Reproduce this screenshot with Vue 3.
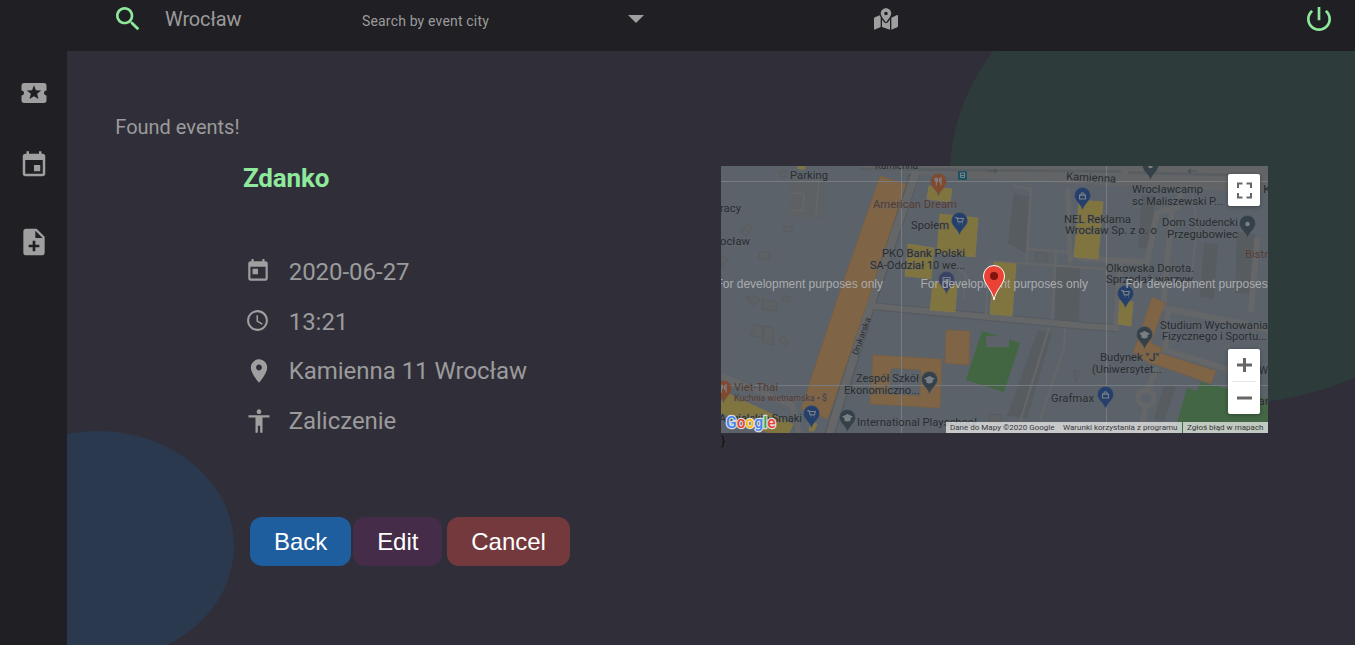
<script setup>
const icons = {
  search: 'M15.5 14h-.79l-.28-.27C15.41 12.59 16 11.11 16 9.5 16 5.91 13.09 3 9.5 3S3 5.91 3 9.5 5.91 16 9.5 16c1.61 0 3.09-.59 4.23-1.57l.27.28v.79l5 4.99L20.49 19l-4.99-5zm-6 0C7.01 14 5 11.99 5 9.5S7.01 5 9.5 5 14 7.01 14 9.5 11.99 14 9.5 14z',
  power: 'M13 3h-2v10h2V3zm4.83 2.17l-1.42 1.42C17.99 7.86 19 9.81 19 12c0 3.87-3.13 7-7 7s-7-3.13-7-7c0-2.19 1.01-4.14 2.58-5.42L6.17 5.17C4.23 6.82 3 9.26 3 12c0 4.97 4.03 9 9 9s9-4.03 9-9c0-2.74-1.23-5.18-3.17-6.83z',
}
const sideIcons = [
  { name: 'ticket', d: 'M20 12c0-1.1.9-2 2-2V6c0-1.1-.9-2-2-2H4c-1.1 0-1.99.9-1.99 2v4c1.1 0 1.99.9 1.99 2s-.89 2-2 2v4c0 1.1.9 2 2 2h16c1.1 0 2-.9 2-2v-4c-1.1 0-2-.9-2-2zm-4.42 4.8L12 14.5l-3.58 2.3 1.08-4.12-3.29-2.69 4.24-.25L12 5.8l1.54 3.95 4.24.25-3.29 2.69 1.09 4.11z' },
  { name: 'event', d: 'M17 12h-5v5h5v-5zM16 1v2H8V1H6v2H5c-1.11 0-1.99.9-1.99 2L3 19c0 1.1.89 2 2 2h14c1.1 0 2-.9 2-2V5c0-1.1-.9-2-2-2h-1V1h-2zm3 18H5V8h14v11z' },
  { name: 'note', d: 'M14 2H6c-1.1 0-1.99.9-1.99 2L4 20c0 1.1.89 2 1.99 2H18c1.1 0 2-.9 2-2V8l-6-6zm2 14h-3v3h-2v-3H8v-2h3v-3h2v3h3v2zm-3-7V3.500L18.500 9H13z' },
]
const details = [
  { name: 'date', text: '2020-06-27', d: 'M19 3h-1V1h-2v2H8V1H6v2H5c-1.11 0-1.99.9-1.99 2L3 19c0 1.1.89 2 2 2h14c1.1 0 2-.9 2-2V5c0-1.1-.9-2-2-2zm0 16H5V8h14v11zM7 10h5v5H7z' },
  { name: 'time', text: '13:21', d: 'M11.99 2C6.47 2 2 6.48 2 12s4.47 10 9.99 10C17.52 22 22 17.52 22 12S17.52 2 11.99 2zM12 20c-4.42 0-8-3.58-8-8s3.58-8 8-8 8 3.58 8 8-3.58 8-8 8zM12.5 7H11v6l5.25 3.15.75-1.23-4.5-2.67z' },
  { name: 'place', text: 'Kamienna 11 Wrocław', d: 'M12 2C8.13 2 5 5.13 5 9c0 5.25 7 13 7 13s7-7.75 7-13c0-3.87-3.13-7-7-7zm0 9.5c-1.38 0-2.5-1.12-2.5-2.5s1.12-2.5 2.5-2.5 2.5 1.12 2.5 2.5-1.12 2.5-2.5 2.5z' },
  { name: 'person', text: 'Zaliczenie', d: 'M12 2c1.1 0 2 .9 2 2s-.9 2-2 2-2-.9-2-2 .9-2 2-2zm9 7h-6v13h-2v-6h-2v6H9V9H3V7h18v2z' },
]
// Map labels: x, baseline y, width, text, optional class
const labels = [
  [790, 178.5, 38, 'Parking'],
  [875, 169, 43, 'Kamienna'],
  [720, 211.5, 21, 'racy'],
  [720, 245, 30, 'ocław'],
  [873, 208, 84, 'American Dream', 'food'],
  [911, 229, 38, 'Społem'],
  [882, 257, 83, 'PKO Bank Polski'],
  [870, 268.5, 95, 'SA-Oddział 10 we...'],
  [1064, 222.5, 67, 'NEL Reklama'],
  [1065, 234, 92, 'Wrocław Sp. z o. o'],
  [1132, 193, 71, 'Wrocławcamp'],
  [1132, 204.5, 91, 'sc Maliszewski P...'],
  [1162, 226, 76, 'Dom Studencki'],
  [1167, 237.5, 71, 'Przegubowiec'],
  [1245, 258, 23, 'Bistr', 'food'],
  [1106, 271.5, 88, 'Olkowska Dorota.'],
  [1106, 282.5, 87, 'Sprzedaż warzyw'],
  [1160, 328.5, 108, 'Studium Wychowania'],
  [1162, 340, 105, 'Fizycznego i Sportu...'],
  [1100, 361, 59, 'Budynek "J"'],
  [1092, 372.5, 70, '(Uniwersytet...'],
  [1051, 402, 43, 'Grafmax'],
  [856, 382, 63, 'Zespół Szkół'],
  [844, 393.5, 76, 'Ekonomiczno...'],
  [734, 391, 44, 'Viet-Thai', 'food'],
  [734, 401, 93, 'Kuchnia wietnamska • $', 'food small'],
  [719, 422, 83, 'Angielskie Smaki'],
  [857, 426, 120, 'International Playschool'],
  [1084, 430, 72, 'Urząd Skarbowy', 'faint'],
  [1263, 193, 8, 'K'],
  [1259, 374, 9, 'W'],
  [1258, 405, 11, 'ar'],
]
// Map pins: x, y of head centre, kind, colour
const pins = [
  [938, 182, 'fork', '#82492f'],
  [959, 221, 'cart', '#243f6c'],
  [946, 280, 'card', '#3a4265'],
  [1082, 196, 'bag', '#243f6c'],
  [1150, 166, 'dot', '#354149'],
  [1247, 224, 'dot', '#354149'],
  [1125, 294, 'cart', '#243f6c'],
  [1144, 335, 'cap', '#354149'],
  [1105, 395, 'bag', '#243f6c'],
  [929, 380, 'cap', '#354149'],
  [723, 389, 'fork', '#82492f'],
  [811, 414, 'cart', '#243f6c'],
  [847, 418, 'cap', '#354149'],
]
const glyphs = {
  fork: 'M-4 -5v3a1.500 1.500 0 0 0 3 0v-3M-2.500 -5v9M3 4v-9q-2 1 -2 5h2',
  cart: 'M-5 -4h2l1.500 5h5l1 -4h-7M-1 3.500h.8M3 3.500h.8',
  card: 'M-4 -3h8v5h-8zM-4 0h8M-2 4h4',
  bag: 'M-3.5 -1h7v4.5h-7zM-1.8 -1v-1a1.8 1.8 0 0 1 3.6 0v1',
  cap: 'M-5 -1.5L0 -4L5 -1.5L0 1ZM-3 0v2.5q3 2 6 0v-2.5',
  dot: 'M-2 0a2 2 0 1 0 4 0a2 2 0 1 0 -4 0',
}
const watermarks = [715.5, 920.5, 1125.5]
</script>

<template>
  <div class="page">
    <header class="topbar">
      <svg class="search" viewBox="0 0 24 24"><path :d="icons.search" /></svg>
      <span class="city">Wrocław</span>
      <div class="select">
        <span>Search by event city</span>
        <svg class="arrow" viewBox="0 0 16 8"><path d="M0 0h16L8 8z" /></svg>
      </div>
      <svg class="mapicon" viewBox="0 0 576 512"><path d="M288 0c-69.59 0-126 56.41-126 126 0 56.26 82.35 158.8 113.9 196.02 6.39 7.54 17.82 7.54 24.2 0C331.65 284.8 414 182.26 414 126 414 56.41 357.59 0 288 0zm0 168c-23.2 0-42-18.8-42-42s18.8-42 42-42 42 18.8 42 42-18.8 42-42 42zM20.12 215.95A32.006 32.006 0 0 0 0 245.66v250.32c0 11.32 11.43 19.06 21.94 14.86L160 448V214.92c-8.84-15.98-16.07-31.54-21.25-46.42L20.12 215.95zM288 359.67c-14.07 0-27.38-6.18-36.51-16.96-19.66-23.2-40.57-49.62-59.49-76.72v182l192 64V266c-18.92 27.09-39.82 53.52-59.49 76.72-9.13 10.77-22.44 16.95-36.51 16.95zm266.06-198.51L416 224v288l139.88-55.95A31.996 31.996 0 0 0 576 426.34V176.02c0-11.32-11.43-19.06-21.94-14.86z" /></svg>
      <svg class="power" viewBox="0 0 24 24"><path :d="icons.power" /></svg>
    </header>
    <div class="body">
      <nav class="sidebar">
        <svg v-for="i in sideIcons" :key="i.name" :class="i.name" viewBox="0 0 24 24"><path :d="i.d" /></svg>
      </nav>
      <main class="main">
        <div class="blob green"></div>
        <div class="blob blue"></div>
        <p class="found">Found events!</p>
        <div class="columns">
          <section class="info">
            <h1>Zdanko</h1>
            <ul>
              <li v-for="d in details" :key="d.name">
                <svg :class="d.name" viewBox="0 0 24 24"><path :d="d.d" /></svg>
                <span>{{ d.text }}</span>
              </li>
            </ul>
            <div class="buttons">
              <button class="back">Back</button>
              <button class="edit">Edit</button>
              <button class="cancel">Cancel</button>
            </div>
          </section>
          <section class="mapcol">
            <div class="map">
              <svg class="canvas" viewBox="721 166 547 267">
                <rect x="721" y="166" width="547" height="267" fill="#5b626a" />
                <!-- parking lots and grey grounds -->
                <path d="M790 178l35 3l-2 38l-34 -3z" fill="#5e6163" />
                <path d="M1014 193l15 4l-4 56l-17 -10zM1204 243l14 1l-4 55l-14 -2zM1237 232l18 2l-4 60l-16 -1zM1056 266l24 2l-1 55l-24 -3zM1038 330l14 3l-25 85l-20 -2zM1164 385l12 2l-12 34l-10 -2zM1142 195l13 1l-4 53l-13 -1z" fill="#575c60" />
                <path d="M747 223l6 4l-7 9l-5 -4zM784 226l8 1l0 5l-8 -1zM760 251l10 2l-1 7l-10 -2zM721 255l7 5l-6 8zM745 298l8 -3l7 5l-6 6zM763 299l14 3l-1 9l-14 -2zM783 295l7 2l-2 5l-6 -2zM754 324l10 2l-2 12l-12 -3zM765 326l8 2l1 17l-12 -3zM781 335l8 7l-3 4l-7 -6zM780 171h6v6h-6zM1036 253h11v8h-11zM990 414l12 1l-1 8l-12 -1zM1075 370l6 3l-6 9z" fill="#5d6164" stroke="#56595b" stroke-width=".6" />
                <!-- roads -->
                <g fill="none" stroke="#545a5f" stroke-linejoin="round">
                  <path d="M915 172L872 300L829 436" stroke-width="11" />
                  <path d="M870 306L1085 326L1116 328" stroke-width="8" />
                </g>
                <path d="M850 166h418v27L1110 186L930 176Z" fill="#626466" />
                <g fill="none" stroke="#656668" stroke-linejoin="round" stroke-linecap="round">
                  <path d="M916 172L872 300L829 436" stroke-width="8" />
                  <path d="M872 306L1085 326L1116 328" stroke-width="6" />
                  <path d="M1116 328L1120 266M1080 258L1147 262L1157 213L1178 207L1181 190M1172 210L1163 308L1245 324L1268 330M1257 240L1251 310" stroke-width="6" />
                  <path d="M1168 309L1165 350L1230 370L1250 379M1156 370L1147 391M1146 405L1140 433M721 376L792 405L799 433M1201 433" stroke-width="6" />
                  <path d="M1068 190L1070 261" stroke-width="5" />
                  <path d="M1013 183L1017 187L1031 189L1027 261M1027 249L1095 254M990 261L1120 270M1056 251L1052 324M963 298L966 275L952 264M1049 328L1020 422M1065 329L1064 348L1040 420M986 315L989 263M1192 192L1197 226L1190 292" stroke-width="2.3" />
                  <path d="M792 193L804 194L803 211L790 210M819 180L816 216" stroke-width="1.5" />
                  <circle cx="1146" cy="398" r="8" stroke-width="5" />
                </g>
                <path d="M860 169L1121 171.5M1128 172.5L1228 175" fill="none" stroke="#575d61" stroke-width="2.5" />
                <path d="M988 171h9M994 169l3 2l-3 2M1197 171h-9M1191 169l-3 2l3 2" fill="none" stroke="#4e5254" stroke-width="1.2" />
                <!-- orange buildings -->
                <g fill="#7f6445" stroke="#756047" stroke-width=".8">
                  <path d="M880 176L906 184L868 300L828 419L801 409L837 300Z" />
                  <path fill-rule="evenodd" d="M873 355L942 359L940 408L870 404ZM891 368L921 370L920 396L889 394Z" />
                  <path d="M946 330L970 331L969 365L945 363Z" />
                  <path d="M1152 297L1165 303L1151 343L1162 348L1160 353L1216 371L1211 384L1160 366L1149 363L1133 352L1138 340Z" />
                </g>
                <!-- yellow buildings -->
                <g fill="#80743f" stroke="#85794a" stroke-width=".7">
                  <path d="M929 186L952 189L950 202L927 199Z" />
                  <path d="M940 214L978 218L975 257L937 253Z" />
                  <path d="M908 244L934 248L931 279L905 276Z" />
                  <path d="M933 282L957 285L955 312L930 310Z" />
                  <path d="M994 262L1016 264L1012 316L990 314Z" />
                  <path d="M1079 200L1103 202L1098 259L1074 257Z" />
                  <path d="M1120 300L1133 302L1131 326L1118 324Z" />
                  <path d="M727 393L793 424L789 433H769L721 413V402Z" />
                  <path d="M811 422L817 424L814 431H809ZM798 166h7v3h-7z" />
                </g>
                <!-- greenery -->
                <path d="M982 331L1020 343L1004 392L966 380Z" fill="#426641" />
                <path d="M986 336h23v11h-23z" fill="#5c6267" />
                <path d="M1187 388L1197 391L1201 382L1268 399V433H1174Z" fill="#436644" />
                <!-- tile seams -->
                <path d="M721 181.5H1268M721 385.5H1268M901.5 166V433M1106.5 166V433" stroke="#777c81" stroke-width="1" />
                <g v-for="(p, i) in pins" :key="'p' + i" :transform="`translate(${p[0] + 0.5} ${p[1]})`">
                  <path d="M0 14C-1.5 8 -8 5 -8 -.5A8 8 0 0 1 8 -.5C8 5 1.5 8 0 14Z" :fill="p[3]" stroke="#59616a" stroke-width=".5" />
                  <path :d="glyphs[p[2]]" transform="scale(.85)" :fill="p[2] === 'dot' || p[2] === 'cap' ? '#777d80' : 'none'" stroke="#7c8287" stroke-width="1.3" />
                </g>
                <rect x="958" y="171" width="9" height="9" rx="1" fill="#1f5261" />
                <path d="M960.500 173h4v4.500h-4zM960.500 175.500h4" fill="none" stroke="#73858b" />
                <g class="labels">
                  <text v-for="(l, i) in labels" :key="'l' + i" :x="l[0]" :y="l[1]" :textLength="l[2]" :class="l[4]" lengthAdjust="spacingAndGlyphs">{{ l[3] }}</text>
                  <text textLength="50" lengthAdjust="spacingAndGlyphs" transform="translate(1066 180) rotate(3)">Kamienna</text>
                  <text class="small" textLength="39" lengthAdjust="spacingAndGlyphs" transform="translate(857.500 355.500) rotate(-70)">Drukarska</text>
                </g>
                <text v-for="w in watermarks" :key="w" class="watermark" :x="w" y="288" textLength="167.500">For development purposes only</text>
                <path d="M994 300C992.500 290 983.500 284 983.500 276A10.500 10.500 0 0 1 1004.500 276C1004.500 284 995.500 290 994 300Z" fill="#ea4335" stroke="#fff" stroke-width="1" />
                <circle cx="994" cy="276" r="4" fill="#811411" />
                <text class="google" x="726" y="427.500" textLength="49.500" lengthAdjust="spacingAndGlyphs"><tspan fill="#4285f4">G</tspan><tspan fill="#ea4335">o</tspan><tspan fill="#fbbc05">o</tspan><tspan fill="#4285f4">g</tspan><tspan fill="#34a853">l</tspan><tspan fill="#ea4335">e</tspan></text>
                <rect x="946" y="422" width="322" height="11" fill="#f5f5f5" fill-opacity=".7" />
                <path d="M1182.500 422v11" stroke="#46694a" />
                <g class="legal">
                  <text x="950" y="430" textLength="104.500" lengthAdjust="spacingAndGlyphs">Dane do Mapy ©2020 Google</text>
                  <text x="1063" y="430" textLength="114.500" lengthAdjust="spacingAndGlyphs">Warunki korzystania z programu</text>
                  <text x="1187" y="430" textLength="76.500" lengthAdjust="spacingAndGlyphs">Zgłoś błąd w mapach</text>
                </g>
              </svg>
              <div class="controls">
                <svg class="full" viewBox="0 0 32 32"><path d="M10 14v-4.500h4.500M18.500 9.500h4.500v4.500M23 19v4.500h-4.500M14.500 23.500h-4.500v-4.500" /></svg>
                <svg class="zoom" viewBox="0 0 32 65"><path d="M9 16h15M16.500 9v14M9 49h15" /><path class="rule" d="M4 32.500h24" /></svg>
              </div>
            </div>
            <span class="brace">}</span>
          </section>
        </div>
      </main>
    </div>
  </div>
</template>

<style>
body { margin: 0; background: #302f3a; }
</style>

<style scoped>
.page { width: 1355px; height: 645px; overflow: hidden; display: flex; flex-direction: column; background: #302f39; color: #9b9b9b; font-family: Roboto, sans-serif; }
svg { display: block; flex: none; fill: #9f9f9f; }
.topbar { box-sizing: border-box; height: 51px; padding: 0 20px 13px 112px; display: flex; align-items: center; background: #201f24; flex: none; }
.search { width: 32px; height: 32px; margin-bottom: 1px; fill: #8ee99d; }
.city { width: 197px; margin-left: 21px; font-size: 20px; line-height: 24px; letter-spacing: -.15px; }
.select { width: 282px; display: flex; align-items: center; justify-content: space-between; font-size: 14px; line-height: 18px; letter-spacing: .17px; padding-top: 3px; }
.arrow { width: 16px; height: 8px; margin-bottom: 3px; }
.mapicon { width: 24px; height: 22px; margin-left: 230px; }
.power { width: 32px; height: 32px; margin: 0 0 1px auto; fill: #8ee99d; }
.body { flex: 1; display: flex; min-height: 0; }
.sidebar { box-sizing: border-box; width: 67px; padding: 27px 0 0 19.400px; background: #201f24; display: flex; flex-direction: column; flex: none; }
.ticket, .event { width: 30px; height: 30px; }
.event { margin-top: 42px; }
.note { width: 32px; height: 32px; margin: 46px 0 0 -1px; }
.main { position: relative; flex: 1; overflow: hidden; }
.blob { position: absolute; border-radius: 50%; }
.green { left: 883px; top: -106px; width: 552px; height: 459px; background: #2e3b3b; }
.blue { left: -105px; top: 380px; width: 272px; height: 230px; background: #2b394e; }
.found { position: relative; margin: 64px 0 0 48.300px; font-size: 20px; line-height: 24px; }
.columns { position: relative; display: flex; padding-top: 27px; }
.info { width: 478px; padding-left: 176px; }
h1 { margin: -3px 0 0; font-size: 26px; line-height: 30px; font-weight: 700; letter-spacing: -.15px; color: #8ee99d; }
ul { list-style: none; margin: 54px 0 0 2.400px; padding: 0; }
li { height: 49.700px; display: flex; align-items: center; font-size: 24px; letter-spacing: -.03px; }
li svg { width: 28px; height: 28px; margin-right: 15.300px; }
li .date { width: 26px; height: 26px; margin: 0 17.300px 2px 0; }
li .time { width: 25px; height: 25px; margin: 0 18.300px 2px 0; }
.buttons { display: flex; margin: 71px 0 0 7px; }
button { height: 49px; padding: 2px 24px 0; border: 0; border-radius: 12px; color: #fff; font: 24px "Liberation Sans", Arial, sans-serif; letter-spacing: -.05px; }
.back { background: #1e5e9f; }
.edit { margin: 0 5px 0 2px; background: #452c48; }
.cancel { background: #73393c; }
.map { position: relative; width: 547px; height: 267px; overflow: hidden; }
.canvas { width: 547px; height: 267px; }
.labels text { font: 11px Roboto, sans-serif; fill: #292c2f; stroke: #62686e; stroke-width: 1.500px; stroke-opacity: .5; paint-order: stroke; }
.labels .food { fill: #563a31; }
.labels .small { font-size: 8.500px; }
.labels .faint { fill: #454a4f; }
.watermark { font: 12px "Liberation Sans", sans-serif; fill: #aaacae; }
.google { font: 500 17px Roboto, sans-serif; stroke: #dcdcdc; stroke-width: 2.500px; paint-order: stroke; }
.legal text { font: 8px Roboto, sans-serif; fill: #383838; }
.controls { position: absolute; top: 8px; right: 8px; bottom: 19px; display: flex; flex-direction: column; justify-content: space-between; }
.controls svg { width: 32px; background: #fff; border-radius: 2px; box-shadow: 0 1px 4px rgba(0, 0, 0, .3); fill: none; stroke: #666; stroke-width: 3; }
.controls .full { height: 32px; stroke-width: 2; }
.zoom { height: 65px; }
.zoom .rule { stroke: #e6e6e6; stroke-width: 1; }
.brace { display: block; font: 13px/15px Roboto, sans-serif; color: #111; }
</style>
